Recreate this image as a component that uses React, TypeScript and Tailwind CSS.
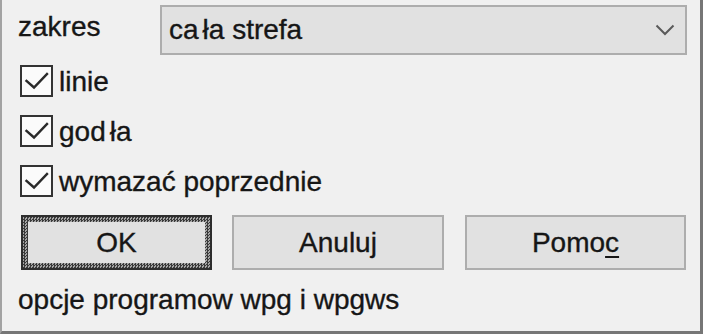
import React from 'react';

const font = { fontFamily: '"Liberation Sans", Arial, sans-serif' };

function CheckRow({ label }: { label: React.ReactNode }) {
  return (
    <div className="flex items-center h-[32px]">
      <div className="relative w-[33px] h-[32px] border-2 border-[#333] bg-[#fbfbfb] shrink-0">
        <svg className="absolute -left-[2px] -top-[2px]" width="33" height="32" viewBox="0 0 33 32" fill="none">
          <path d="M6.5 16L14 22.5L27 9" stroke="#2a2a2a" strokeWidth="2.4" strokeLinecap="square" />
        </svg>
      </div>
      <span className="ml-[6px] leading-[32px] pt-[1px]">{label}</span>
    </div>
  );
}

export default function App() {
  return (
    <div
      style={font}
      className="w-[703px] h-[334px] bg-[#f0f0f0] text-[#161616] text-[28px] [-webkit-text-stroke:0.35px_#161616] border-l-2 border-l-[#a3a3a3] border-r-[3px] border-r-[#767676] border-b-[3px] border-b-[#767676] pl-[16px] pr-[13px] pt-[5px] flex flex-col"
    >
      {/* zakres row */}
      <div className="flex items-start h-[50px]">
        <span className="w-[142px] leading-[32px] mt-[6px]">zakres</span>
        <div className="flex-1 h-[50px] border-2 border-[#adadad] bg-[#e1e1e1] flex items-center pl-[7px] pr-[10px]">
          <span className="flex-1 leading-[32px]">
            ca<span className="ml-[4px]">ła</span> strefa
          </span>
          <svg width="20" height="12" viewBox="0 0 20 12" fill="none">
            <path d="M1.5 1.5L10 10L18.5 1.5" stroke="#5a5a5a" strokeWidth="2" />
          </svg>
        </div>
      </div>

      <div className="mt-[10px] flex flex-col gap-[18px] ml-[2px]">
        <CheckRow label="linie" />
        <CheckRow
          label={
            <>
              god<span className="ml-[4px]">ła</span>
            </>
          }
        />
        <CheckRow label="wymazać poprzednie" />
      </div>

      {/* buttons */}
      <div className="mt-[18px] flex ml-[3px] h-[55px]">
        <div className="w-[191px] h-[55px] border-2 border-[#2e2e2e] bg-[repeating-conic-gradient(#3a3a3a_0_25%,#a5a5a5_0_50%)] bg-[length:3px_3px] p-[5px]">
          <div className="w-full h-full bg-[#e1e1e1] flex items-center justify-center leading-[32px]">OK</div>
        </div>
        <div className="ml-[20px] w-[212px] h-[55px] border-2 border-[#adadad] bg-[#e1e1e1] flex items-center justify-center leading-[32px]">
          Anuluj
        </div>
        <div className="ml-[21px] w-[221px] h-[55px] border-2 border-[#adadad] bg-[#e1e1e1] flex items-center justify-center leading-[32px]">
          Pomo<span className="underline underline-offset-[4px] decoration-2">c</span>
        </div>
      </div>

      <div className="mt-[14px] leading-[32px]">opcje programow wpg i wpgws</div>
    </div>
  );
}
